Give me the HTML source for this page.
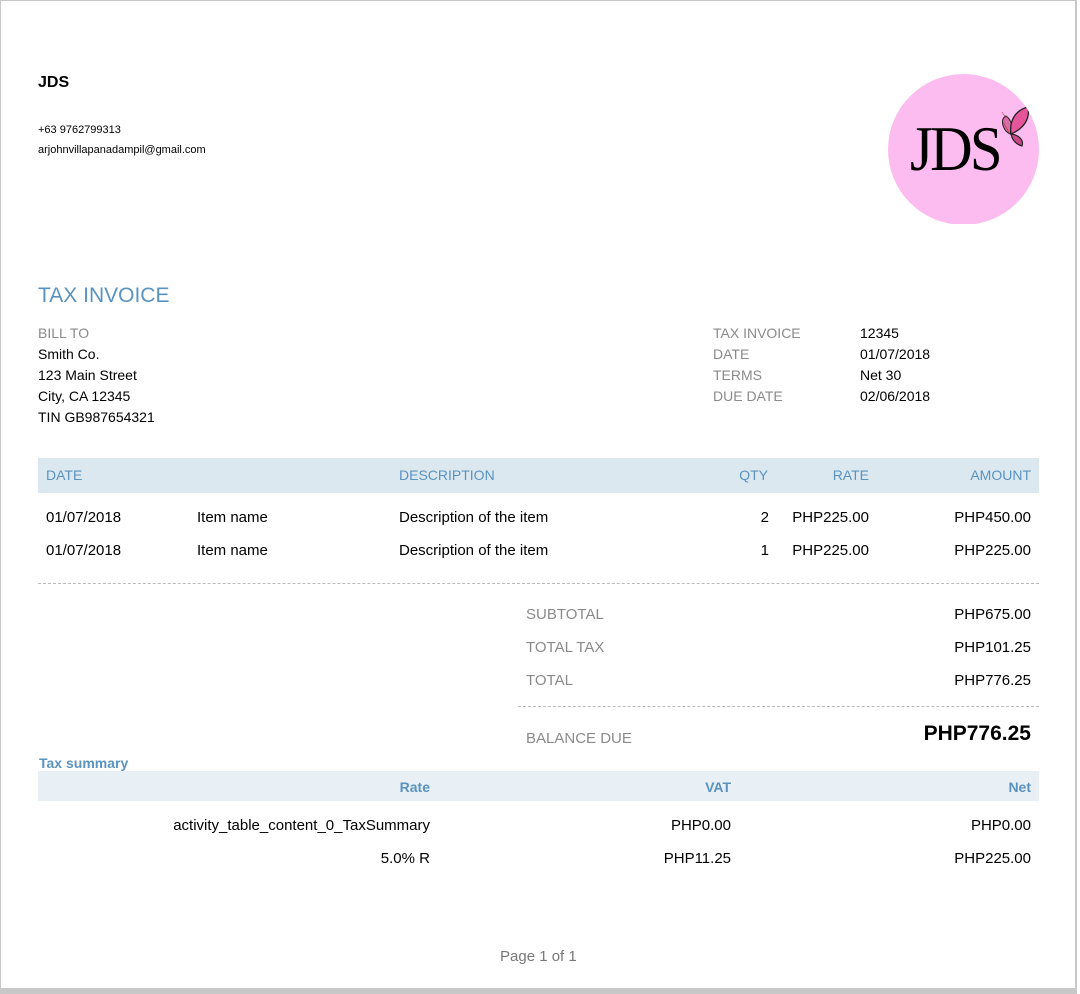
<!DOCTYPE html>
<html><head><meta charset="utf-8"><style>
*{margin:0;padding:0;box-sizing:border-box}
html,body{width:1080px;height:994px;background:#fff;overflow:hidden}
body{font-family:"Liberation Sans",Arial,sans-serif;color:#000;position:relative}
.pg{position:absolute;left:0;top:0;width:1077px;height:989px;border:1px solid #c8c8c8;border-right:2px solid #c8c8c8;background:#fff}
.bot{position:absolute;left:0;top:989px;width:1077px;height:5px;background:#c8c8c8}
.a{position:absolute;white-space:nowrap;font-size:15px;line-height:16px}
.g{color:#8a8a8a}
.b{color:#5a93c0}
.r{text-align:right}
</style></head><body>
<div class="pg"></div><div class="bot"></div>
<div class="a" style="left:38px;top:75px;font-size:16px;font-weight:bold">JDS</div>
<div class="a" style="left:38px;top:122px;font-size:11px">+63 9762799313</div>
<div class="a" style="left:38px;top:142px;font-size:11px">arjohnvillapanadampil@gmail.com</div>
<div style="position:absolute;left:888px;top:74px;width:151px;height:151px;border-radius:50%;background:#fcbcf0;overflow:hidden">
<div class="a" style="left:22px;top:40px;font-family:'Liberation Serif',serif;font-size:64px;line-height:70px;letter-spacing:-3px;transform:scaleX(0.92);transform-origin:left">JDS</div>
<svg style="position:absolute;left:106px;top:30px" width="40" height="46" viewBox="0 0 40 46"><path d="M16 30 C8 26 6 14 12 12 C18 16 19 24 16 30Z" fill="#d86aa6" stroke="#222" stroke-width="1"/><path d="M17 30 C15 16 22 6 34 3 C36 14 31 24 17 30Z" fill="#e6559a" stroke="#222" stroke-width="1.3"/><path d="M17 30 C25 31 30 36 28 42 C21 40 18 35 17 30Z" fill="#c9488a" stroke="#222" stroke-width="1.2"/><path d="M16 30 L9 18 M12 14 L8 8" stroke="#a33" stroke-width="0.6" fill="none"/></svg>
</div>
<div style="position:absolute;left:888px;top:224px;width:152px;height:2px;background:#fff"></div>
<div class="a b" style="left:38px;top:285px;font-size:21px;line-height:22px">TAX INVOICE</div>
<div class="a g" style="left:38px;top:325px;font-size:14px">BILL TO</div>
<div class="a" style="left:38px;top:346px;font-size:14px">Smith Co.</div>
<div class="a" style="left:38px;top:367px;font-size:14px">123 Main Street</div>
<div class="a" style="left:38px;top:388px;font-size:14px">City, CA 12345</div>
<div class="a" style="left:38px;top:409px;font-size:14px">TIN GB987654321</div>
<div class="a g" style="left:713px;top:325px;font-size:14px">TAX INVOICE</div>
<div class="a g" style="left:713px;top:346px;font-size:14px">DATE</div>
<div class="a g" style="left:713px;top:367px;font-size:14px">TERMS</div>
<div class="a g" style="left:713px;top:388px;font-size:14px">DUE DATE</div>
<div class="a" style="left:860px;top:325px;font-size:14px">12345</div>
<div class="a" style="left:860px;top:346px;font-size:14px">01/07/2018</div>
<div class="a" style="left:860px;top:367px;font-size:14px">Net 30</div>
<div class="a" style="left:860px;top:388px;font-size:14px">02/06/2018</div>
<div style="position:absolute;left:38px;top:458px;width:1001px;height:35px;background:#dce8f0"></div>
<div class="a b" style="left:46px;top:467px;font-size:14px">DATE</div>
<div class="a b" style="left:399px;top:467px;font-size:14px">DESCRIPTION</div>
<div class="a b r" style="left:700px;width:68px;top:467px;font-size:14px">QTY</div>
<div class="a b r" style="left:780px;width:89px;top:467px;font-size:14px">RATE</div>
<div class="a b r" style="left:900px;width:131px;top:467px;font-size:14px">AMOUNT</div>
<div class="a" style="left:46px;top:510px">01/07/2018</div>
<div class="a" style="left:197px;top:510px">Item name</div>
<div class="a" style="left:399px;top:510px">Description of the item</div>
<div class="a r" style="left:700px;width:69px;top:510px">2</div>
<div class="a r" style="left:760px;width:109px;top:510px">PHP225.00</div>
<div class="a r" style="left:900px;width:131px;top:510px">PHP450.00</div>
<div class="a" style="left:46px;top:543px">01/07/2018</div>
<div class="a" style="left:197px;top:543px">Item name</div>
<div class="a" style="left:399px;top:543px">Description of the item</div>
<div class="a r" style="left:700px;width:69px;top:543px">1</div>
<div class="a r" style="left:760px;width:109px;top:543px">PHP225.00</div>
<div class="a r" style="left:900px;width:131px;top:543px">PHP225.00</div>
<div style="position:absolute;left:38px;top:583px;width:1001px;border-top:1px dashed #bbb"></div>
<div class="a g" style="left:526px;top:607px">SUBTOTAL</div>
<div class="a g" style="left:526px;top:640px">TOTAL TAX</div>
<div class="a g" style="left:526px;top:673px">TOTAL</div>
<div class="a r" style="left:850px;width:181px;top:607px">PHP675.00</div>
<div class="a r" style="left:850px;width:181px;top:640px">PHP101.25</div>
<div class="a r" style="left:850px;width:181px;top:673px">PHP776.25</div>
<div style="position:absolute;left:518px;top:706px;width:521px;border-top:1px dashed #bbb"></div>
<div class="a g" style="left:526px;top:731px">BALANCE DUE</div>
<div class="a r" style="left:850px;width:181px;top:722px;font-size:21px;line-height:24px;font-weight:bold">PHP776.25</div>
<div class="a b" style="left:39px;top:755px;font-size:14px;font-weight:bold">Tax summary</div>
<div style="position:absolute;left:38px;top:771px;width:1001px;height:30px;background:#e8eff5"></div>
<div class="a b r" style="left:200px;width:230px;top:779px;font-size:14px;font-weight:bold">Rate</div>
<div class="a b r" style="left:500px;width:231px;top:779px;font-size:14px;font-weight:bold">VAT</div>
<div class="a b r" style="left:800px;width:231px;top:779px;font-size:14px;font-weight:bold">Net</div>
<div class="a r" style="left:100px;width:330px;top:818px">activity_table_content_0_TaxSummary</div>
<div class="a r" style="left:500px;width:231px;top:818px">PHP0.00</div>
<div class="a r" style="left:800px;width:231px;top:818px">PHP0.00</div>
<div class="a r" style="left:100px;width:330px;top:851px">5.0% R</div>
<div class="a r" style="left:500px;width:231px;top:851px">PHP11.25</div>
<div class="a r" style="left:800px;width:231px;top:851px">PHP225.00</div>
<div class="a" style="left:500px;top:949px;color:#777">Page 1 of 1</div>
</body></html>
